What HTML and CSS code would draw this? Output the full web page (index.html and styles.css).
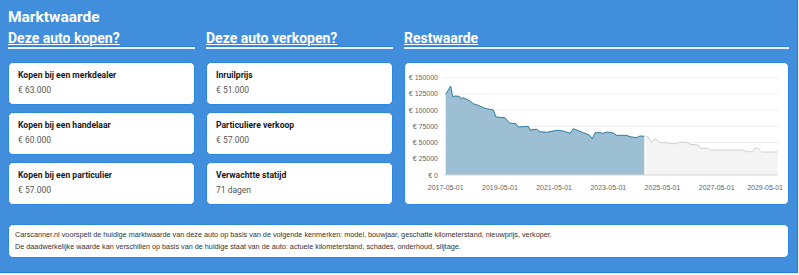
FILE: index.html
```html
<!DOCTYPE html>
<html lang="nl">
<head>
  <meta charset="UTF-8">
  <meta name="viewport" content="width=device-width, initial-scale=1.0">
  <title>Marktwaarde</title>

  <link rel="stylesheet" href="styles.css">
</head>
<body>

  <div class="panel">
    <h1 class="title">Marktwaarde</h1>

    <div class="columns">
      <section class="col">
        <h2 class="col-title">Deze auto kopen?</h2>
        <div class="rule"></div>
        <div class="cards">
          <div class="card price-card">
            <div class="label">Kopen bij een merkdealer</div>
            <div class="value">€ 63.000</div>
          </div>
          <div class="card price-card">
            <div class="label">Kopen bij een handelaar</div>
            <div class="value">€ 60.000</div>
          </div>
          <div class="card price-card">
            <div class="label">Kopen bij een particulier</div>
            <div class="value">€ 57.000</div>
          </div>
        </div>
      </section>

      <section class="col">
        <h2 class="col-title">Deze auto verkopen?</h2>
        <div class="rule"></div>
        <div class="cards">
          <div class="card price-card">
            <div class="label">Inruilprijs</div>
            <div class="value">€ 51.000</div>
          </div>
          <div class="card price-card">
            <div class="label">Particuliere verkoop</div>
            <div class="value">€ 57.000</div>
          </div>
          <div class="card price-card">
            <div class="label">Verwachtte statijd</div>
            <div class="value">71 dagen</div>
          </div>
        </div>
      </section>

      <section class="col">
        <h2 class="col-title">Restwaarde</h2>
        <div class="rule"></div>
        <div class="card chart-card">
          <svg class="chart" width="383" height="141" viewBox="0 0 383 141">
            <!-- grid -->
            <g class="grid">
              <line x1="39" y1="14.7" x2="373" y2="14.7"/>
              <line x1="39" y1="30.9" x2="373" y2="30.9"/>
              <line x1="39" y1="47.1" x2="373" y2="47.1"/>
              <line x1="39" y1="63.3" x2="373" y2="63.3"/>
              <line x1="39" y1="79.6" x2="373" y2="79.6"/>
              <line x1="39" y1="95.8" x2="373" y2="95.8"/>
            </g>

            <!-- prognose -->
            <path class="area-future" d="M239.3 72.7 L243.3 74 L246.7 79.7 L250 75.7 L253.3 78 L255 79.7 L261.7 79.7 L265 80.7 L271.7 80.7 L275 79 L281.7 79.3 L285 81.3 L293.3 82 L295.7 85.3 L303.3 85.3 L305.7 87 L338.3 87 L341.7 88.7 L347.7 88.7 L350 84.7 L353.3 85.7 L356.7 89 L372.7 89 L372.7 112 L239.3 112 Z"/>
            <path class="line-future" d="M239.3 72.7 L243.3 74 L246.7 79.7 L250 75.7 L253.3 78 L255 79.7 L261.7 79.7 L265 80.7 L271.7 80.7 L275 79 L281.7 79.3 L285 81.3 L293.3 82 L295.7 85.3 L303.3 85.3 L305.7 87 L338.3 87 L341.7 88.7 L347.7 88.7 L350 84.7 L353.3 85.7 L356.7 89 L372.7 89"/>

            <!-- historie -->
            <path class="area-past" d="M40.7 31.3 L45.7 23 L47.7 33.7 L50 33 L54.3 33.3 L56 35.7 L58.3 34.7 L61.7 36.3 L65 38 L68.3 40.7 L73.3 42.3 L78.3 44.7 L81.7 45.7 L88.3 47 L91 54 L100 54.7 L104.3 60 L111 60.7 L113.3 64 L123.3 63.3 L125 67 L131.7 66.3 L135 68.7 L141.7 69.3 L151.7 67.3 L158.3 68 L165 70.3 L168.3 65.7 L171.7 67 L178.3 69.7 L184.3 72 L187.3 75.7 L190 69.7 L195 69.7 L198.3 70.3 L201.7 69 L208.3 70 L211.7 72.3 L221.7 72.3 L225 73.7 L231.7 74.7 L235 73 L239.3 73.3 L239.3 112 L40.7 112 Z"/>
            <path class="line-past" d="M40.7 31.3 L45.7 23 L47.7 33.7 L50 33 L54.3 33.3 L56 35.7 L58.3 34.7 L61.7 36.3 L65 38 L68.3 40.7 L73.3 42.3 L78.3 44.7 L81.7 45.7 L88.3 47 L91 54 L100 54.7 L104.3 60 L111 60.7 L113.3 64 L123.3 63.3 L125 67 L131.7 66.3 L135 68.7 L141.7 69.3 L151.7 67.3 L158.3 68 L165 70.3 L168.3 65.7 L171.7 67 L178.3 69.7 L184.3 72 L187.3 75.7 L190 69.7 L195 69.7 L198.3 70.3 L201.7 69 L208.3 70 L211.7 72.3 L221.7 72.3 L225 73.7 L231.7 74.7 L235 73 L239.3 73.3"/>

            <line class="split" x1="240.3" y1="72" x2="240.3" y2="112"/>
            <line class="axis" x1="39" y1="112" x2="373" y2="112"/>

            <!-- y labels -->
            <g class="ticks y-ticks">
              <text x="33" y="17.2">€ 150000</text>
              <text x="33" y="33.4">€ 125000</text>
              <text x="33" y="49.6">€ 100000</text>
              <text x="33" y="65.8">€ 75000</text>
              <text x="33" y="82.1">€ 50000</text>
              <text x="33" y="98.3">€ 25000</text>
              <text x="33" y="114.5">€ 0</text>
            </g>

            <!-- x labels -->
            <g class="ticks x-ticks">
              <text x="40.7" y="126.5">2017-05-01</text>
              <text x="94.9" y="126.5">2019-05-01</text>
              <text x="149.1" y="126.5">2021-05-01</text>
              <text x="203.3" y="126.5">2023-05-01</text>
              <text x="257.5" y="126.5">2025-05-01</text>
              <text x="311.7" y="126.5">2027-05-01</text>
              <text class="last" x="378" y="126.5">2029-05-01</text>
            </g>
          </svg>
        </div>
      </section>
    </div>

    <div class="card note">
      <p>Carscanner.nl voorspelt de huidige marktwaarde van deze auto op basis van de volgende kenmerken: model, bouwjaar, geschatte kilometerstand, nieuwprijs, verkoper.</p>
      <p>De daadwerkelijke waarde kan verschillen op basis van de huidige staat van de auto: actuele kilometerstand, schades, onderhoud, slijtage.</p>
    </div>
  </div>

</body>
</html>
```

FILE: styles.css
```css
/* General Reset */
* {
  margin: 0;
  padding: 0;
  box-sizing: border-box;
}

body {
  font-family: Roboto, "Liberation Sans", Arial, sans-serif;
  background-color: #f4f6f8;
  color: #222;
}

.panel {
  width: 798px;
  height: 273px;
  background-color: #418fdc;
  border-right: 1px solid #1f79d6;
  border-bottom: 1px solid #1f79d6;
  padding: 8px 8px 16px 8px;
}

.title {
  font-size: 15.5px;
  line-height: 18px;
  font-weight: bold;
  color: #fff;
}

.columns {
  display: grid;
  grid-template-columns: 187px 187px 1fr;
  column-gap: 11px;
  margin-top: 5px;
}

.col-title {
  font-size: 14px;
  line-height: 15px;
  font-weight: bold;
  color: #fff;
  text-decoration: underline;
  text-decoration-thickness: 1px;
  text-underline-offset: 1px;
}

.rule {
  height: 3px;
  border-top: 1px solid #2a7fd6;
  background-color: #e9f2fc;
  margin-bottom: 13px;
}

.cards {
  display: flex;
  flex-direction: column;
  gap: 7px;
}

.card {
  background-color: #fff;
  border: 1px solid #2c87e2;
  border-radius: 5px;
}

.price-card {
  height: 43px;
  padding: 7px 9px 0 9px;
}

.label {
  font-size: 8.6px;
  line-height: 10px;
  font-weight: bold;
  color: #1a1a1a;
}

.value {
  font-size: 8.5px;
  line-height: 10px;
  margin-top: 5px;
  color: #555;
}

.chart-card {
  height: 143px;
  overflow: hidden;
}

.chart {
  display: block;
}

.grid line {
  stroke: #eeeeee;
  stroke-width: 1;
}

.axis {
  stroke: #d6d6d6;
  stroke-width: 1;
}

.area-past {
  fill: #9cbfd3;
}

.line-past {
  fill: none;
  stroke: #2f7ca3;
  stroke-width: 1;
}

.area-future {
  fill: #f4f4f4;
}

.line-future {
  fill: none;
  stroke: #d0d0d0;
  stroke-width: 1;
}

.split {
  stroke: #fff;
  stroke-width: 1.2;
}

.ticks text {
  font-family: "Liberation Sans", Arial, sans-serif;
  font-size: 7px;
  fill: #666;
}

.y-ticks text {
  text-anchor: end;
}

.x-ticks text {
  text-anchor: middle;
}

.x-ticks text.last {
  text-anchor: end;
}

.note {
  margin-top: 19px;
  padding: 4px 6px;
  font-family: "Liberation Sans", Arial, sans-serif;
  font-size: 7.25px;
  line-height: 12px;
  color: #333;
}
```
